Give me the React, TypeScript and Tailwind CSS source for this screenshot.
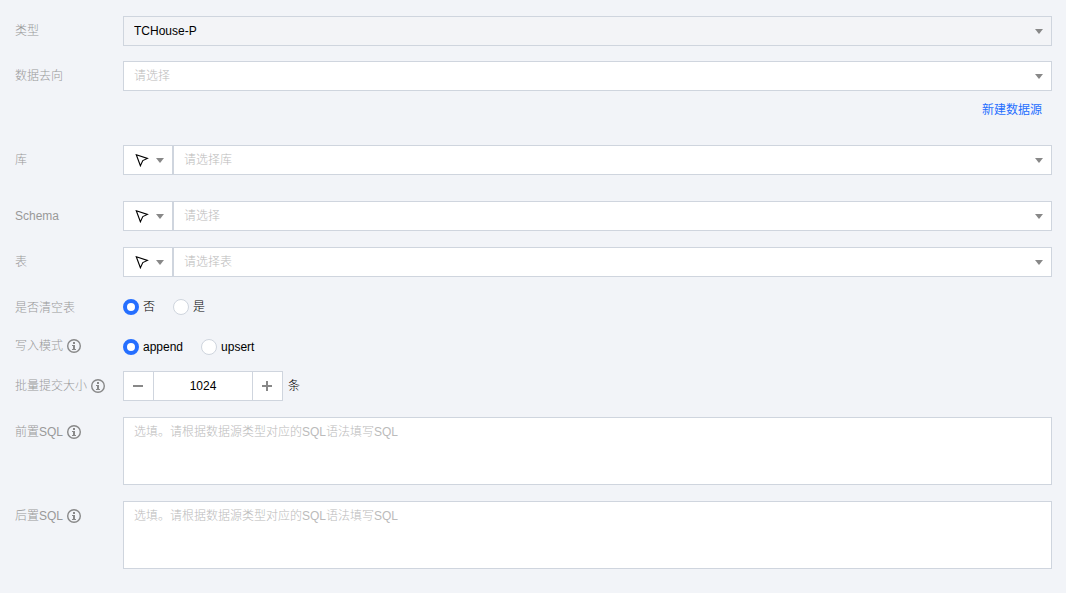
import { useState } from "react";
import type { ReactNode } from "react";
import clsx from "clsx";

function CaretIcon({ className }: { className?: string }) {
    return (
        <svg viewBox="0 0 8 5" className={clsx("h-[5px] w-2 fill-[#888]", className)} aria-hidden="true">
            <path d="M0 0h8L4 5z" />
        </svg>
    );
}

function CursorIcon() {
    return (
        <svg viewBox="0 0 14 14" className="size-3.5 fill-none stroke-black" aria-hidden="true">
            <path d="M1.3 1.8 12.4 5.4 7.8 7.6 5.4 12.8z" strokeWidth="1.1" />
        </svg>
    );
}

function InfoIcon() {
    return (
        <svg viewBox="0 0 14 14" className="size-3.5 shrink-0" aria-hidden="true">
            <circle cx="7" cy="7" r="6.3" fill="none" stroke="#888" strokeWidth="1.4" />
            <path d="M6 3h2v2H6zM5 6h3v4h1v1H5v-1h1V7H5z" fill="#888" />
        </svg>
    );
}

interface RowProps {
    label: string;
    htmlFor?: string;
    hasInfo?: boolean;
    className?: string;
    children: ReactNode;
}

function Row({ label, htmlFor, hasInfo, className, children }: RowProps) {
    return (
        <div className={clsx("flex items-start", className)}>
            <div className="flex h-[30px] w-[108px] shrink-0 items-center gap-1 font-light text-[#999]">
                {htmlFor ? <label htmlFor={htmlFor}>{label}</label> : <span>{label}</span>}
                {hasInfo && <InfoIcon />}
            </div>
            <div className="min-w-0 flex-1">{children}</div>
        </div>
    );
}

interface SelectProps {
    id: string;
    text: string;
    disabled?: boolean;
}

function Select({ id, text, disabled }: SelectProps) {
    return (
        <div className="relative min-w-0 flex-1">
            <select
                id={id}
                disabled={disabled}
                className="block h-[30px] w-full appearance-none border border-[#cfd5de] bg-white px-2.5 font-light text-[#bbb] outline-none focus:border-[#266fff] disabled:bg-[#f3f4f7] disabled:text-black disabled:opacity-100"
            >
                <option>{text}</option>
            </select>
            <CaretIcon className="pointer-events-none absolute top-[13px] right-[9px]" />
        </div>
    );
}

function ModeSelect({ id, text }: SelectProps) {
    return (
        <div className="flex">
            <button
                type="button"
                aria-label="选择方式"
                aria-haspopup="listbox"
                className="flex h-[30px] w-[50px] items-center gap-[7px] border border-[#cfd5de] bg-white pl-[11px]"
            >
                <CursorIcon />
                <CaretIcon />
            </button>
            <Select id={id} text={text} />
        </div>
    );
}

interface RadioGroupProps {
    name: string;
    label: string;
    options: string[];
    className: string;
}

function RadioGroup({ name, label, options, className }: RadioGroupProps) {
    const [value, setValue] = useState(options[0]);

    return (
        <div role="radiogroup" aria-label={label} className={clsx("flex items-center gap-[18px]", className)}>
            {options.map((option) => (
                <label key={option} className="flex items-center gap-1 font-light">
                    <input
                        type="radio"
                        name={name}
                        checked={value === option}
                        onChange={() => setValue(option)}
                        className="size-4 appearance-none rounded-full border border-[#cfd5de] bg-white checked:border-4 checked:border-[#266fff]"
                    />
                    {option}
                </label>
            ))}
        </div>
    );
}

function SqlInput({ id }: { id: string }) {
    return (
        <textarea
            id={id}
            placeholder="选填。请根据数据源类型对应的SQL语法填写SQL"
            className="block h-[68px] w-full resize-none border border-[#cfd5de] bg-white px-2.5 py-1 outline-none placeholder:font-light placeholder:text-[#bbb] focus:border-[#266fff]"
        />
    );
}

export default function App() {
    const [batchSize, setBatchSize] = useState(1024);

    return (
        <form className="min-h-screen bg-[#f2f4f8] py-4 pr-3.5 pl-[15px] font-['Liberation_Sans','Noto_Sans_CJK_SC',sans-serif] text-xs leading-5 text-black">
            <Row label="类型" htmlFor="type">
                <Select id="type" text="TCHouse-P" disabled />
            </Row>
            <Row label="数据去向" htmlFor="target" className="mt-[15px]">
                <Select id="target" text="请选择" />
                <div className="mt-[9px] flex justify-end pr-2.5">
                    <a href="#" className="text-[#266fff]">
                        新建数据源
                    </a>
                </div>
            </Row>
            <Row label="库" htmlFor="database" className="mt-[25px]">
                <ModeSelect id="database" text="请选择库" />
            </Row>
            <Row label="Schema" htmlFor="schema" className="mt-[26px]">
                <ModeSelect id="schema" text="请选择" />
            </Row>
            <Row label="表" htmlFor="table" className="mt-4">
                <ModeSelect id="table" text="请选择表" />
            </Row>
            <Row label="是否清空表" className="mt-4">
                <RadioGroup name="truncate" label="是否清空表" options={["否", "是"]} className="h-7" />
            </Row>
            <Row label="写入模式" hasInfo className="mt-2">
                <RadioGroup name="writeMode" label="写入模式" options={["append", "upsert"]} className="h-8" />
            </Row>
            <Row label="批量提交大小" htmlFor="batchSize" hasInfo className="mt-2">
                <div className="flex items-center gap-[5px]">
                    <div className="flex h-[30px] w-40 border border-[#cfd5de] bg-white">
                        <button
                            type="button"
                            aria-label="减少"
                            onClick={() => setBatchSize(batchSize - 1)}
                            className="flex w-[29px] items-center justify-center pr-px"
                        >
                            <span className="h-0.5 w-2.5 bg-[#888]" />
                        </button>
                        <input
                            id="batchSize"
                            type="text"
                            inputMode="numeric"
                            value={batchSize}
                            onChange={(e) => setBatchSize(Number(e.target.value) || 0)}
                            className="min-w-0 flex-1 border-x border-[#cfd5de] text-center outline-none"
                        />
                        <button
                            type="button"
                            aria-label="增加"
                            onClick={() => setBatchSize(batchSize + 1)}
                            className="flex w-[29px] items-center justify-center pr-px"
                        >
                            <svg viewBox="0 0 10 10" className="size-2.5 fill-[#888]" aria-hidden="true">
                                <path d="M4 0h2v4h4v2H6v4H4V6H0V4h4z" />
                            </svg>
                        </button>
                    </div>
                    <span className="font-light">条</span>
                </div>
            </Row>
            <Row label="前置SQL" htmlFor="preSql" hasInfo className="mt-4">
                <SqlInput id="preSql" />
            </Row>
            <Row label="后置SQL" htmlFor="postSql" hasInfo className="mt-4">
                <SqlInput id="postSql" />
            </Row>
        </form>
    );
}
